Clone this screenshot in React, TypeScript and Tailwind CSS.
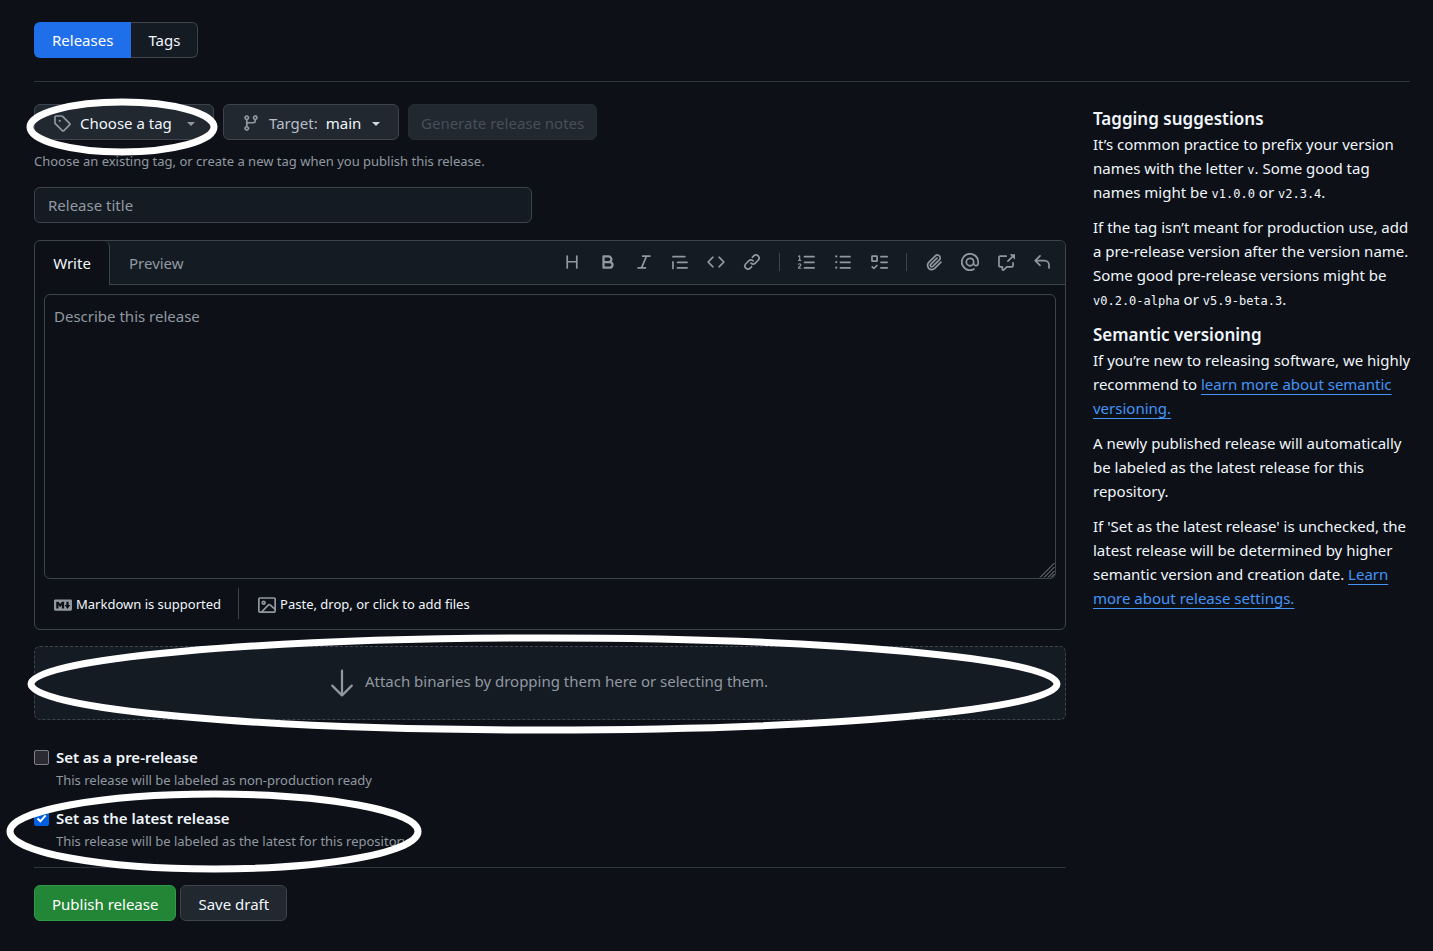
import { useState, type ReactNode } from "react";

const paths = {
  tag: "M1 7.775V2.75C1 1.784 1.784 1 2.75 1h5.025c.464 0 .91.184 1.238.513l6.25 6.25a1.75 1.75 0 0 1 0 2.474l-5.026 5.026a1.75 1.75 0 0 1-2.474 0l-6.25-6.25A1.752 1.752 0 0 1 1 7.775Zm1.5 0c0 .066.026.13.073.177l6.25 6.25a.25.25 0 0 0 .354 0l5.025-5.025a.25.25 0 0 0 0-.354l-6.25-6.25a.25.25 0 0 0-.177-.073H2.75a.25.25 0 0 0-.25.25ZM6 5a1 1 0 1 1 0 2 1 1 0 0 1 0-2Z",
  branch:
    "M9.5 3.25a2.25 2.25 0 1 1 3 2.122V6A2.5 2.5 0 0 1 10 8.5H6a1 1 0 0 0-1 1v1.128a2.251 2.251 0 1 1-1.5 0V5.372a2.25 2.25 0 1 1 1.5 0v1.836A2.493 2.493 0 0 1 6 7h4a1 1 0 0 0 1-1v-.628A2.25 2.25 0 0 1 9.5 3.25Zm-6 0a.75.75 0 1 0 1.5 0 .75.75 0 0 0-1.5 0Zm8.25-.75a.75.75 0 1 0 0 1.5.75.75 0 0 0 0-1.5ZM4.25 12a.75.75 0 1 0 0 1.5.75.75 0 0 0 0-1.5Z",
  heading:
    "M3.75 2a.75.75 0 0 1 .75.75V7h7V2.75a.75.75 0 0 1 1.5 0v10.5a.75.75 0 0 1-1.5 0V8.5h-7v4.75a.75.75 0 0 1-1.5 0V2.75A.75.75 0 0 1 3.75 2Z",
  bold: "M4 2h4.5a3.501 3.501 0 0 1 2.852 5.53A3.499 3.499 0 0 1 9.5 14H4a1 1 0 0 1-1-1V3a1 1 0 0 1 1-1Zm1 7v3h4.5a1.5 1.5 0 0 0 0-3Zm3.5-2a1.5 1.5 0 0 0 0-3H5v3Z",
  italic:
    "M6 2.75A.75.75 0 0 1 6.75 2h6.5a.75.75 0 0 1 0 1.5h-2.505l-3.858 9H9.25a.75.75 0 0 1 0 1.5h-6.5a.75.75 0 0 1 0-1.5h2.505l3.858-9H6.75A.75.75 0 0 1 6 2.75Z",
  quote:
    "M1.75 2.5h10.5a.75.75 0 0 1 0 1.5H1.75a.75.75 0 0 1 0-1.5Zm4 5h8.5a.75.75 0 0 1 0 1.5h-8.5a.75.75 0 0 1 0-1.5Zm0 5h8.5a.75.75 0 0 1 0 1.5h-8.5a.75.75 0 0 1 0-1.5ZM2.5 7.75v6a.75.75 0 0 1-1.5 0v-6a.75.75 0 0 1 1.5 0Z",
  code: "m11.28 3.22 4.25 4.25a.75.75 0 0 1 0 1.06l-4.25 4.25a.749.749 0 0 1-1.275-.326.749.749 0 0 1 .215-.734L13.94 8l-3.72-3.72a.749.749 0 0 1 .326-1.275.749.749 0 0 1 .734.215Zm-6.56 0a.751.751 0 0 1 1.042.018.751.751 0 0 1 .018 1.042L2.06 8l3.72 3.72a.749.749 0 0 1-.326 1.275.749.749 0 0 1-.734-.215L.47 8.53a.75.75 0 0 1 0-1.06Z",
  link: "m7.775 3.275 1.25-1.25a3.5 3.5 0 1 1 4.95 4.95l-2.5 2.5a3.5 3.5 0 0 1-4.95 0 .751.751 0 0 1 .018-1.042.751.751 0 0 1 1.042-.018 1.998 1.998 0 0 0 2.83 0l2.5-2.5a2.002 2.002 0 0 0-2.83-2.83l-1.25 1.25a.751.751 0 0 1-1.042-.018.751.751 0 0 1-.018-1.042Zm-4.69 9.64a1.998 1.998 0 0 0 2.83 0l1.25-1.25a.751.751 0 0 1 1.042.018.751.751 0 0 1 .018 1.042l-1.25 1.25a3.5 3.5 0 1 1-4.95-4.95l2.5-2.5a3.5 3.5 0 0 1 4.95 0 .751.751 0 0 1-.018 1.042.751.751 0 0 1-1.042.018 1.998 1.998 0 0 0-2.83 0l-2.5 2.5a1.998 1.998 0 0 0 0 2.83Z",
  ordered:
    "M5 3.25a.75.75 0 0 1 .75-.75h8.5a.75.75 0 0 1 0 1.5h-8.5A.75.75 0 0 1 5 3.25Zm0 5a.75.75 0 0 1 .75-.75h8.5a.75.75 0 0 1 0 1.5h-8.5A.75.75 0 0 1 5 8.25Zm0 5a.75.75 0 0 1 .75-.75h8.5a.75.75 0 0 1 0 1.5h-8.5a.75.75 0 0 1-.75-.75ZM.924 10.32a.5.5 0 0 1-.851-.525l.001-.001.001-.002.002-.004.007-.011c.097-.144.215-.273.348-.384.228-.19.588-.392 1.068-.392.468 0 .858.181 1.126.484.259.294.377.673.377 1.038 0 .987-.686 1.495-1.156 1.845l-.047.035c-.303.225-.522.4-.654.597h1.357a.5.5 0 0 1 0 1H.5a.5.5 0 0 1-.5-.5c0-1.005.692-1.52 1.167-1.875l.035-.025c.531-.396.8-.625.8-1.078a.57.57 0 0 0-.128-.376C1.806 10.068 1.695 10 1.5 10a.658.658 0 0 0-.429.163.835.835 0 0 0-.144.153ZM2.003 2.5V6h.503a.5.5 0 0 1 0 1H.5a.5.5 0 0 1 0-1h.503V3.308l-.28.14a.5.5 0 0 1-.446-.895l1.003-.5a.5.5 0 0 1 .723.447Z",
  unordered:
    "M5.75 2.5h8.5a.75.75 0 0 1 0 1.5h-8.5a.75.75 0 0 1 0-1.5Zm0 5h8.5a.75.75 0 0 1 0 1.5h-8.5a.75.75 0 0 1 0-1.5Zm0 5h8.5a.75.75 0 0 1 0 1.5h-8.5a.75.75 0 0 1 0-1.5ZM2 14a1 1 0 1 1 0-2 1 1 0 0 1 0 2Zm1-6a1 1 0 1 1-2 0 1 1 0 0 1 2 0ZM2 4a1 1 0 1 1 0-2 1 1 0 0 1 0 2Z",
  tasks:
    "M2 2h4a1 1 0 0 1 1 1v4a1 1 0 0 1-1 1H2a1 1 0 0 1-1-1V3a1 1 0 0 1 1-1Zm4.655 8.595a.75.75 0 0 1 0 1.06L4.03 14.28a.75.75 0 0 1-1.06 0l-1.5-1.5a.749.749 0 0 1 .326-1.275.749.749 0 0 1 .734.215l.97.97 2.095-2.095a.75.75 0 0 1 1.06 0ZM9.75 2.5h5.5a.75.75 0 0 1 0 1.5h-5.5a.75.75 0 0 1 0-1.5Zm0 5h5.5a.75.75 0 0 1 0 1.5h-5.5a.75.75 0 0 1 0-1.5Zm0 5h5.5a.75.75 0 0 1 0 1.5h-5.5a.75.75 0 0 1 0-1.5Zm-7.25-9v3h3v-3Z",
  clip: "M12.212 3.02a1.753 1.753 0 0 0-2.478.003l-5.83 5.83a3.007 3.007 0 0 0-.88 2.127c0 .795.315 1.551.88 2.116.567.567 1.333.89 2.126.89.79 0 1.548-.321 2.116-.89l5.48-5.48a.75.75 0 0 1 1.061 1.06l-5.48 5.48a4.492 4.492 0 0 1-3.177 1.33c-1.2 0-2.345-.487-3.187-1.33a4.483 4.483 0 0 1-1.32-3.177c0-1.195.475-2.341 1.32-3.186l5.83-5.83a3.25 3.25 0 0 1 5.553 2.297c0 .863-.343 1.691-.953 2.301L7.439 12.39c-.375.377-.884.59-1.416.593a1.998 1.998 0 0 1-1.412-.593 1.992 1.992 0 0 1 0-2.828l5.48-5.48a.751.751 0 0 1 1.042.018.751.751 0 0 1 .018 1.042l-5.48 5.48a.492.492 0 0 0 0 .707.499.499 0 0 0 .352.154.51.51 0 0 0 .356-.154l5.833-5.827a1.755 1.755 0 0 0 0-2.481Z",
  mention:
    "M4.75 2.37a6.501 6.501 0 0 0 6.5 11.26.75.75 0 0 1 .75 1.298A7.999 7.999 0 0 1 .989 4.148 8 8 0 0 1 16 7.75v1.5a2.75 2.75 0 0 1-5.072 1.475 3.999 3.999 0 0 1-6.65-4.19A4 4 0 0 1 12 8v1.25a1.25 1.25 0 0 0 2.5 0V7.867a6.5 6.5 0 0 0-9.75-5.496ZM10.5 8a2.5 2.5 0 1 0-5 0 2.5 2.5 0 0 0 5 0Z",
  crossRef:
    "M2.75 3.5a.25.25 0 0 0-.25.25v7.5c0 .138.112.25.25.25h2a.75.75 0 0 1 .75.75v2.19l2.72-2.72a.749.749 0 0 1 .53-.22h4.5a.25.25 0 0 0 .25-.25v-2.5a.75.75 0 0 1 1.5 0v2.5A1.75 1.75 0 0 1 13.25 13H9.06l-2.573 2.573A1.458 1.458 0 0 1 4 14.543V13H2.75A1.75 1.75 0 0 1 1 11.25v-7.5C1 2.784 1.784 2 2.75 2h5.5a.75.75 0 0 1 0 1.5ZM16 1.25v4.146a.25.25 0 0 1-.427.177L14.03 4.03l-3.75 3.75a.749.749 0 0 1-1.275-.326.749.749 0 0 1 .215-.734l3.75-3.75-1.543-1.543A.25.25 0 0 1 11.604 1h4.146a.25.25 0 0 1 .25.25Z",
  reply:
    "M6.78 1.97a.75.75 0 0 1 0 1.06L3.81 6h6.44A4.75 4.75 0 0 1 15 10.75v2.5a.75.75 0 0 1-1.5 0v-2.5a3.25 3.25 0 0 0-3.25-3.25H3.81l2.97 2.97a.749.749 0 0 1-.326 1.275.749.749 0 0 1-.734-.215L1.47 7.28a.75.75 0 0 1 0-1.06l4.25-4.25a.75.75 0 0 1 1.06 0Z",
  markdown:
    "M14.85 3c.63 0 1.15.52 1.14 1.15v7.7c0 .63-.51 1.15-1.15 1.15H1.15C.52 13 0 12.48 0 11.84V4.15C0 3.52.52 3 1.15 3ZM9 11V5H7L5.5 7 4 5H2v6h2V8l1.5 1.92L7 8v3Zm2.99.5L14.5 8H13V5h-2v3H9.5Z",
  image:
    "M16 13.25A1.75 1.75 0 0 1 14.25 15H1.75A1.75 1.75 0 0 1 0 13.25V2.75C0 1.784.784 1 1.75 1h12.5c.966 0 1.75.784 1.75 1.75ZM1.75 2.5a.25.25 0 0 0-.25.25v10.5c0 .138.112.25.25.25h.94l.03-.03 6.077-6.078a1.75 1.75 0 0 1 2.412-.06L14.5 10.31V2.75a.25.25 0 0 0-.25-.25Zm12.5 11a.25.25 0 0 0 .25-.25v-.917l-4.298-3.889a.25.25 0 0 0-.344.009L4.81 13.5ZM7 6a2 2 0 1 1-3.999.001A2 2 0 0 1 7 6ZM5.5 6a.5.5 0 1 0-1 0 .5.5 0 0 0 1 0Z",
};

type IconName = keyof typeof paths;

function Icon({ name }: { name: IconName }) {
  return (
    <svg viewBox="0 0 16 16" className="size-[18px] shrink-0 fill-[#9198a1]" aria-hidden="true">
      <path d={paths[name]} />
    </svg>
  );
}

function Caret() {
  return (
    <svg viewBox="0 0 8 4" className="h-1 w-2 shrink-0 fill-current" aria-hidden="true">
      <path d="M0 0h8L4 4z" />
    </svg>
  );
}

/** White ring drawn over the part of the form it highlights. */
function Ring({ className }: { className: string }) {
  return (
    <svg className={`pointer-events-none absolute z-10 overflow-visible ${className}`} aria-hidden="true">
      <ellipse cx="50%" cy="50%" rx="50%" ry="50%" fill="none" stroke="#fff" strokeWidth="7" />
    </svg>
  );
}

const button =
  "flex h-9 items-center rounded-md border border-[#3d444d] bg-[#212830] pt-[2px] text-[15px] whitespace-nowrap";

const toolbar: { name: IconName; label: string }[][] = [
  [
    { name: "heading", label: "Heading" },
    { name: "bold", label: "Bold" },
    { name: "italic", label: "Italic" },
    { name: "quote", label: "Quote" },
    { name: "code", label: "Code" },
    { name: "link", label: "Link" },
  ],
  [
    { name: "ordered", label: "Numbered list" },
    { name: "unordered", label: "Unordered list" },
    { name: "tasks", label: "Task list" },
  ],
  [
    { name: "clip", label: "Attach files" },
    { name: "mention", label: "Mention" },
    { name: "crossRef", label: "Reference" },
    { name: "reply", label: "Saved replies" },
  ],
];

function Editor() {
  return (
    <section className="mt-[17px] rounded-md border border-[#3d444d]">
      <div className="flex h-11 rounded-t-md bg-[#151b23]">
        <div className="flex" role="tablist">
          <button
            role="tab"
            aria-selected="true"
            className="w-[75px] rounded-t-md border-r border-[#3d444d] bg-[#0d1117] text-center text-[15px]"
          >
            Write
          </button>
          <button
            role="tab"
            aria-selected="false"
            className="border-b border-[#3d444d] px-[19px] pt-px text-[15px] text-[#9198a1]"
          >
            Preview
          </button>
        </div>
        <div className="flex grow items-center justify-end border-b border-[#3d444d] pr-[5px] pb-[2px]">
          {toolbar.map((group, i) => (
            <div key={i} className="flex items-center">
              {i > 0 && <span className="mx-[9px] h-[18px] w-px bg-[#3d444d]" />}
              {group.map((item) => (
                <button
                  key={item.name}
                  aria-label={item.label}
                  className="flex size-9 items-center justify-center"
                >
                  <Icon name={item.name} />
                </button>
              ))}
            </div>
          ))}
        </div>
      </div>
      <div className="relative m-[9px] mb-0">
        <textarea
          aria-label="Describe this release"
          placeholder="Describe this release"
          className="block h-[285px] w-full resize-none rounded-md border border-[#3d444d] bg-transparent p-[9px] text-[15px] leading-6 outline-none placeholder:text-[#9198a1]"
        />
        <svg
          viewBox="0 0 16 16"
          className="pointer-events-none absolute right-px bottom-px size-4"
          stroke="#8b8b8b"
          aria-hidden="true"
        >
          <path d="M1 15.5 15.5 1M5 15.5 15.5 5M9 15.5 15.5 9M12 15.5 15.500 12" fill="none" />
        </svg>
      </div>
      <div className="flex h-[50px] items-center px-[19px] pb-px text-[13px]">
        <a href="#markdown" className="flex items-center gap-1 pt-[3px]">
          <Icon name="markdown" />
          Markdown is supported
        </a>
        <span className="mr-[19px] ml-[17px] h-[31px] w-px bg-[#3d444d]" />
        <button className="flex items-center gap-1 pt-[3px]">
          <Icon name="image" />
          Paste, drop, or click to add files
        </button>
      </div>
    </section>
  );
}

function Option({
  id,
  label,
  note,
  initial,
  children,
}: {
  id: string;
  label: string;
  note: string;
  initial: boolean;
  children?: ReactNode;
}) {
  const [checked, setChecked] = useState(initial);
  return (
    <div className="relative flex gap-[7px]">
      <span className="relative mt-[5px] size-[15px] shrink-0">
        <input
          id={id}
          type="checkbox"
          checked={checked}
          onChange={(e) => setChecked(e.target.checked)}
          aria-describedby={`${id}-note`}
          className="block size-[15px] appearance-none rounded-xs border border-[#7d7d86] bg-[#2b2a33] checked:border-[#0060df] checked:bg-[#0060df]"
        />
        {checked && (
          <svg viewBox="0 0 15 15" className="pointer-events-none absolute inset-0 size-[15px]" aria-hidden="true">
            <path d="m3.5 7.5 2.8 2.8 5.4-6" fill="none" stroke="#fff" strokeWidth="2" />
          </svg>
        )}
      </span>
      <div>
        <label htmlFor={id} className="block text-[15px] leading-6 font-semibold">
          {label}
        </label>
        <p id={`${id}-note`} className="mt-px text-[13px] leading-5 text-[#9198a1]">
          {note}
        </p>
      </div>
      {children}
    </div>
  );
}

const link = "text-[#4493f8] underline underline-offset-4";
const mono = "font-['DejaVu_Sans_Mono',monospace] text-[12px] leading-none";

function Sidebar() {
  return (
    <aside className="-mr-2 grow basis-0 pt-[3px] pl-[27px] text-[15px] leading-6">
      <h2 className="text-[17px] font-semibold">Tagging suggestions</h2>
      <p className="mt-px">
        It’s common practice to prefix your version names with the letter <code className={mono}>v</code>. Some
        good tag names might be <code className={mono}>v1.0.0</code> or <code className={mono}>v2.3.4</code>.
      </p>
      <p className="mt-[11px]">
        If the tag isn’t meant for production use, add a pre-release version after the version name. Some good
        pre-release versions might be <code className={mono}>v0.2.0-alpha</code> or{" "}
        <code className={mono}>v5.9-beta.3</code>.
      </p>
      <h2 className="mt-3 text-[17px] font-semibold">Semantic versioning</h2>
      <p className="mt-px">
        If you’re new to releasing software, we highly recommend to{" "}
        <a href="#semver" className={link}>
          learn more about semantic versioning.
        </a>
      </p>
      <p className="mt-[11px]">
        A newly published release will automatically be labeled as the latest release for this repository.
      </p>
      <p className="mt-[11px]">
        If 'Set as the latest release' is unchecked, the latest release will be determined by higher semantic
        version and creation date.{" "}
        <a href="#settings" className={link}>
          Learn more about release settings.
        </a>
      </p>
    </aside>
  );
}

export default function App() {
  return (
    <div className="min-h-screen bg-[#0d1117] pt-[22px] pr-[23px] pb-[30px] pl-[34px] font-['Noto_Sans',sans-serif] text-[#f0f6fc]">
      <nav className="flex text-[15px]">
        <a href="#releases" className="flex h-9 items-center rounded-l-md bg-[#1f6feb] px-[18px] text-white">
          Releases
        </a>
        <a
          href="#tags"
          className="flex h-9 items-center rounded-r-md border border-l-0 border-[#3d444d] bg-[#151b23] px-[17px]"
        >
          Tags
        </a>
      </nav>
      <hr className="mt-[23px] border-[#2f353d]" />
      <div className="mt-[22px] flex">
        <main className="w-3/4">
          <div className="flex gap-[9px]">
            <div className="relative">
              <button className={`${button} w-[180px] px-[18px]`}>
                <Icon name="tag" />
                <span className="ml-[9px]">Choose a tag</span>
                <span className="ml-auto flex pt-px text-[#9198a1]">
                  <Caret />
                </span>
              </button>
              <Ring className="-top-[2px] -left-1 h-[50px] w-[184px]" />
            </div>
            <button className={`${button} w-[176px] px-[18px]`}>
              <Icon name="branch" />
              <span className="ml-[9px] text-[#b7bdc8]">Target:</span>
              <span className="ml-2">main</span>
              <span className="ml-auto flex pt-px text-[#d1d7e0]">
                <Caret />
              </span>
            </button>
            <button
              disabled
              className="h-9 rounded-md border border-[#262c34] bg-[#212830] px-3 pt-[2px] text-[15px] whitespace-nowrap text-[#484f58]"
            >
              Generate release notes
            </button>
          </div>
          <p className="mt-[11px] text-[13px] leading-5 text-[#9198a1]">
            Choose an existing tag, or create a new tag when you publish this release.
          </p>
          <input
            type="text"
            aria-label="Release title"
            placeholder="Release title"
            className="mt-4 block h-9 w-[498px] max-w-full rounded-md border border-[#3d444d] bg-[#151b23] px-[13px] text-[15px] outline-none placeholder:text-[#9198a1]"
          />
          <Editor />
          <div className="relative mt-4">
            <button className="flex h-[74px] w-full items-center justify-center gap-[5px] rounded-md border border-dashed border-[#3d444d] bg-[#151b23] pr-2 text-[15px] text-[#9198a1]">
              <svg viewBox="0 0 24 24" className="size-9 fill-current" aria-hidden="true">
                <path d="M4.97 13.22a.75.75 0 0 1 1.06 0l5.22 5.22V3.75a.75.75 0 0 1 1.5 0v14.69l5.22-5.22a.75.75 0 0 1 1.06 1.06l-6.5 6.5a.75.75 0 0 1-1.06 0l-6.5-6.5a.75.75 0 0 1 0-1.06Z" />
              </svg>
              <span className="pb-1">Attach binaries by dropping them here or selecting them.</span>
            </button>
            <Ring className="-top-2 -left-[3px] h-[92px] w-[calc(100%-6px)]" />
          </div>
          <div className="mt-[25px] flex flex-col gap-4">
            <Option
              id="prerelease"
              label="Set as a pre-release"
              note="This release will be labeled as non-production ready"
              initial={false}
            />
            <Option
              id="latest"
              label="Set as the latest release"
              note="This release will be labeled as the latest for this repository."
              initial
            >
              <Ring className="-top-3 -left-[24px] h-[75px] w-[408px]" />
            </Option>
          </div>
          <hr className="mt-4 border-[#2f353d]" />
          <div className="mt-[17px] flex gap-1">
            <button className="h-9 rounded-md border border-[#2e9a45] bg-[#238636] px-[17px] pt-[2px] text-[15px] text-white">
              Publish release
            </button>
            <button className={`${button} px-[17px]`}>Save draft</button>
          </div>
        </main>
        <Sidebar />
      </div>
    </div>
  );
}
